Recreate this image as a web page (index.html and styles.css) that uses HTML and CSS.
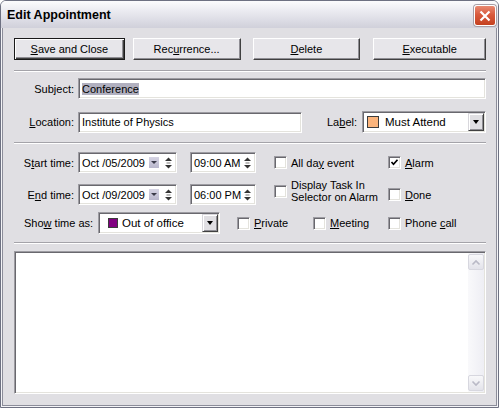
FILE: index.html
```html
<!DOCTYPE html>
<html>
<head>
<meta charset="utf-8">
<title>Edit Appointment</title>
<link rel="stylesheet" href="styles.css">
</head>
<body>
<div class="window">
  <div class="titlebar">
    <span class="title">Edit Appointment</span>
    <span class="close"><svg width="12" height="12" viewBox="0 0 12 12"><path d="M1.5 1.5 L10.5 10.5 M10.5 1.5 L1.5 10.5" stroke="#fff" stroke-width="2.2" fill="none"/></svg></span>
  </div>
  <div class="body">
    <div class="buttons">
      <div class="btn default b1"><span><u>S</u>ave and Close</span></div>
      <div class="btn b2"><span>Rec<u>u</u>rrence...</span></div>
      <div class="btn b3"><span><u>D</u>elete</span></div>
      <div class="btn b4"><span><u>E</u>xecutable</span></div>
    </div>
    <div class="sep sep1"></div>

    <div class="row r-subject">
      <span class="lbl">Subject:</span>
      <div class="field sunken grow"><span class="sel">Conference</span></div>
    </div>
    <div class="row r-location">
      <span class="lbl"><u>L</u>ocation:</span>
      <div class="field sunken loc">Institute of Physics</div>
      <span class="lbl-label">La<u>b</u>el:</span>
      <div class="combo sunken combo-label">
        <span class="swatch orange"></span><span class="ctext">Must Attend</span>
        <span class="ddbtn"><i class="tri"></i></span>
      </div>
    </div>
    <div class="sep sep2"></div>

    <div class="row r-start">
      <span class="lbl">S<u>t</u>art time:</span>
      <div class="field sunken date">
        <span class="dtext">Oct /05/2009</span>
        <span class="mini"><i class="tri small"></i></span>
        <span class="spin"><svg width="9" height="12" viewBox="0 0 9 12"><polygon points="4.5,0.5 8,4 1,4" fill="#333"/><rect x="2.5" y="5.5" width="4" height="1" fill="#777"/><polygon points="1,8 8,8 4.5,11.5" fill="#333"/></svg></span>
      </div>
      <div class="field sunken time">
        <span class="dtext">09:00 AM</span>
        <span class="spin"><svg width="9" height="12" viewBox="0 0 9 12"><polygon points="4.5,0.5 8,4 1,4" fill="#333"/><rect x="2.5" y="5.5" width="4" height="1" fill="#777"/><polygon points="1,8 8,8 4.5,11.5" fill="#333"/></svg></span>
      </div>
      <div class="check c-col1"><span class="cb"></span><span>All da<u>y</u> event</span></div>
      <div class="check"><span class="cb"><svg width="9" height="9" viewBox="0 0 9 9"><polyline points="1.5,4 3.5,6.2 7.5,1.8" fill="none" stroke="#000" stroke-width="1.7"/></svg></span><span><u>A</u>larm</span></div>
    </div>

    <div class="row r-end">
      <span class="lbl">E<u>n</u>d time:</span>
      <div class="field sunken date">
        <span class="dtext">Oct /09/2009</span>
        <span class="mini"><i class="tri small"></i></span>
        <span class="spin"><svg width="9" height="12" viewBox="0 0 9 12"><polygon points="4.5,0.5 8,4 1,4" fill="#333"/><rect x="2.5" y="5.5" width="4" height="1" fill="#777"/><polygon points="1,8 8,8 4.5,11.5" fill="#333"/></svg></span>
      </div>
      <div class="field sunken time">
        <span class="dtext">06:00 PM</span>
        <span class="spin"><svg width="9" height="12" viewBox="0 0 9 12"><polygon points="4.5,0.5 8,4 1,4" fill="#333"/><rect x="2.5" y="5.5" width="4" height="1" fill="#777"/><polygon points="1,8 8,8 4.5,11.5" fill="#333"/></svg></span>
      </div>
      <div class="check c-col1 c-two"><span class="cb"></span><span class="two">Display Task In<br>Selector on Alarm</span></div>
      <div class="check"><span class="cb"></span><span><u>D</u>one</span></div>
    </div>

    <div class="row r-show">
      <span class="lbl-show">Sho<u>w</u> time as:</span>
      <div class="combo sunken combo-show">
        <span class="swatch purple"></span><span class="ctext">Out of office</span>
        <span class="ddbtn"><i class="tri"></i></span>
      </div>
      <div class="check c-private"><span class="cb"></span><span><u>P</u>rivate</span></div>
      <div class="check c-meeting"><span class="cb"></span><span><u>M</u>eeting</span></div>
      <div class="check"><span class="cb"></span><span>Phone <u>c</u>all</span></div>
    </div>
    <div class="sep sep3"></div>

    <div class="memo sunken">
      <div class="vscroll">
        <div class="sbtn"><svg width="10" height="7" viewBox="0 0 10 7"><polyline points="1.5,5.5 5,2 8.5,5.5" fill="none" stroke="#b9b9c6" stroke-width="1.6"/></svg></div>
        <div class="track"></div>
        <div class="sbtn"><svg width="10" height="7" viewBox="0 0 10 7"><polyline points="1.5,1.5 5,5 8.5,1.5" fill="none" stroke="#b9b9c6" stroke-width="1.6"/></svg></div>
      </div>
    </div>
  </div>
</div>
</body>
</html>
```

FILE: styles.css
```css
* { box-sizing: border-box; }
html, body { margin: 0; padding: 0; }
body {
  width: 499px;
  height: 408px;
  overflow: hidden;
  background: #ffffff;
  font-family: "Liberation Sans", Arial, sans-serif;
  font-size: 11px;
  color: #000;
}
u { text-decoration: underline; text-underline-offset: 1px; }

.window {
  width: 499px;
  height: 408px;
  display: flex;
  flex-direction: column;
  border: 1px solid #6e7182;
  border-radius: 6px 6px 0 0;
  background: #f4f4f7;
  overflow: hidden;
}
.titlebar {
  flex: none;
  height: 27px;
  display: flex;
  justify-content: space-between;
  align-items: flex-start;
  padding: 4px 2px 0 6px;
  background: linear-gradient(to bottom, #fcfcfd 0%, #eeeef3 30%, #dfdfe7 65%, #d0d0da 100%);
}
.title {
  font-weight: bold;
  font-size: 12.5px;
  line-height: 21px;
}
.close {
  width: 22px;
  height: 21px;
  display: flex;
  align-items: center;
  justify-content: center;
  border: 1px solid #ffffff;
  border-radius: 3px;
  background: linear-gradient(to bottom, #e88a72 0%, #d95a3d 45%, #c4401f 100%);
  box-shadow: 0 0 0 1px #a89fa6;
}

.body {
  flex: 1;
  margin: 0 1px 1px;
  border: 1px solid #8c8d9a;
  border-top: 0;
  background: #e0dfe3;
  padding: 10px 10px 0 11px;
  display: flex;
  flex-direction: column;
}

.buttons {
  flex: none;
  display: flex;
  height: 22px;
}
.btn {
  display: flex;
  align-items: center;
  justify-content: center;
  height: 22px;
  background: #e7e6ea;
  border: 1px solid;
  border-color: #ffffff #404040 #404040 #ffffff;
  box-shadow: inset -1px -1px #8f8e94;
}
.btn.default {
  border-color: #1a1a1a;
  box-shadow: inset 1px 1px #ffffff, inset -1px -1px #404040, inset -2px -2px #8f8e94;
}
.b1 { width: 111px; }
.b2 { width: 108px; margin-left: 8px; }
.b3 { width: 108px; margin-left: 12px; }
.b4 { width: 113px; margin-left: 13px; }

.sep {
  flex: none;
  height: 2px;
  border-top: 1px solid #a4a3a9;
  border-bottom: 1px solid #ffffff;
}
.sep1 { margin-top: 10px; }
.sep2 { margin-top: 9px; }
.sep3 { margin-top: 8px; }

.row {
  flex: none;
  display: flex;
  align-items: center;
}
.r-subject { margin-top: 6px; height: 21px; }
.r-location { margin-top: 12px; height: 22px; }
.r-start { margin-top: 8px; height: 21px; }
.r-end { margin-top: 11px; height: 21px; }
.r-show { margin-top: 7px; height: 22px; }

.lbl {
  flex: none;
  width: 60px;
  margin-right: 4px;
  text-align: right;
  white-space: nowrap;
}
.lbl-show {
  flex: none;
  width: 84px;
  padding-left: 10px;
  white-space: nowrap;
}
.lbl-label {
  flex: none;
  margin-left: 25px;
  white-space: nowrap;
}

.sunken {
  background: #ffffff;
  border: 1px solid;
  border-color: #9d9ca2 #ffffff #ffffff #9d9ca2;
  box-shadow: inset 1px 1px #69686e, inset -1px -1px #e4e3dd;
}
.field {
  height: 21px;
  display: flex;
  align-items: center;
  padding: 0 2px 0 3px;
  white-space: nowrap;
}
.grow { flex: 1; }
.loc { width: 224px; }
.sel { background: #b1b0bf; }

.combo {
  height: 22px;
  display: flex;
  align-items: center;
  padding: 1px;
  white-space: nowrap;
}
.combo-label { width: 124px; margin-left: auto; }
.combo-show { width: 122px; }
.swatch {
  flex: none;
  border: 1px solid #3c3c3c;
}
.orange { width: 12px; height: 12px; background: #fbb47c; margin: 0 6px 0 3px; }
.purple { width: 10px; height: 10px; background: #800080; margin: 0 4px 0 8px; }
.ctext { flex: 1; font-size: 11.5px; }
.ddbtn {
  flex: none;
  width: 16px;
  align-self: stretch;
  display: flex;
  align-items: center;
  justify-content: center;
  background: #e0dfe3;
  border: 1px solid;
  border-color: #d8d7dc #404040 #404040 #d8d7dc;
  box-shadow: inset 1px 1px #ffffff, inset -1px -1px #8f8e94;
}
.tri {
  display: block;
  width: 0;
  height: 0;
  border-left: 3.5px solid transparent;
  border-right: 3.5px solid transparent;
  border-top: 4px solid #000;
}
.tri.small {
  border-left-width: 3px;
  border-right-width: 3px;
  border-top: 3px solid #3a3a48;
}

.date { width: 99px; margin-right: 13px; }
.time { width: 66px; }
.dtext { flex: 1; font-size: 11px; }
.mini {
  flex: none;
  width: 10px;
  height: 11px;
  display: flex;
  align-items: center;
  justify-content: center;
  background: linear-gradient(to bottom, #d6d4e4, #b9b7cc);
  margin-right: 5px;
}
.spin {
  flex: none;
  display: flex;
  width: 9px;
  height: 12px;
  margin-right: 1px;
}

.check {
  display: flex;
  align-items: center;
  gap: 4px;
  white-space: nowrap;
}
.cb {
  flex: none;
  width: 13px;
  height: 13px;
  display: flex;
  align-items: center;
  justify-content: center;
  background: #ffffff;
  border: 1px solid;
  border-color: #9d9ca2 #ffffff #ffffff #9d9ca2;
  box-shadow: inset 1px 1px #69686e, inset -1px -1px #e4e3dd;
}
.c-col1 { width: 114px; margin-left: 18px; }
.c-two { margin-bottom: 7px; }
.two { line-height: 12px; }
.c-private { width: 76px; margin-left: 17px; }
.c-meeting { width: 75px; }

.memo {
  flex: none;
  margin-top: 7px;
  height: 143px;
  padding: 1px;
  display: flex;
  justify-content: flex-end;
}
.vscroll {
  width: 16px;
  display: flex;
  flex-direction: column;
  background: linear-gradient(to right, #f9f9fb, #eeeef4);
}
.sbtn {
  flex: none;
  height: 16px;
  margin: 1px 0;
  display: flex;
  align-items: center;
  justify-content: center;
  border: 1px solid #d7d7df;
  border-radius: 2px;
  background: linear-gradient(to bottom, #f8f8fa, #e3e3ea);
}
.track { flex: 1; }
```
